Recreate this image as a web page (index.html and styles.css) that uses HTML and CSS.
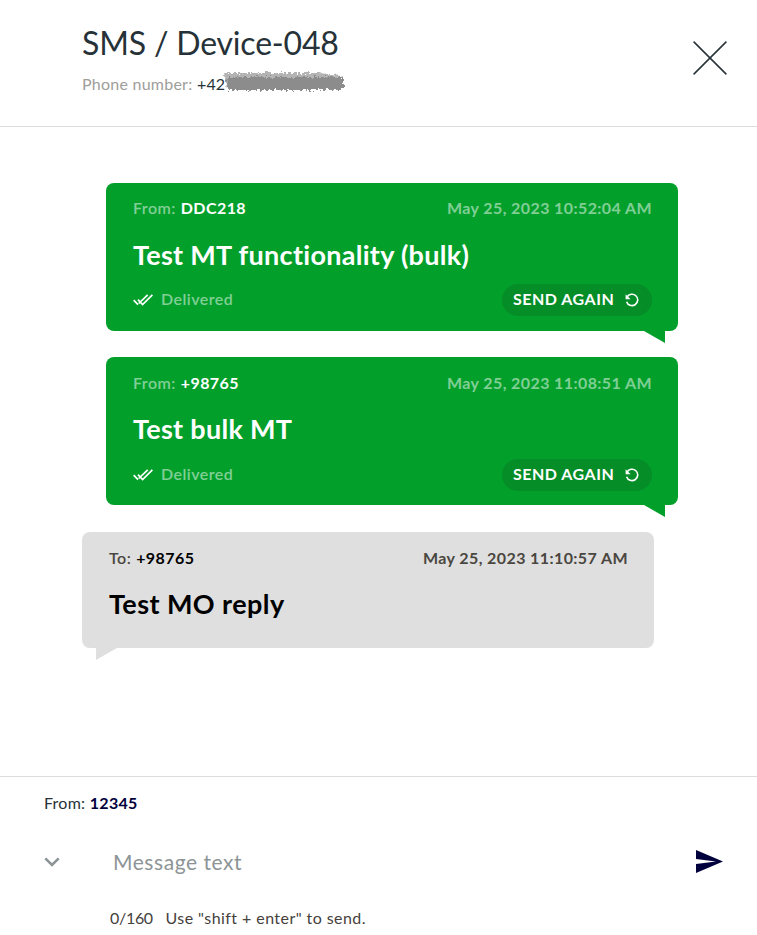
FILE: index.html
```html
<!DOCTYPE html>
<html lang="en">
<head>
<meta charset="utf-8">
<title>SMS / Device-048</title>
<link rel="stylesheet" href="styles.css">
</head>
<body>
<svg class="defs" width="0" height="0" aria-hidden="true">
  <symbol id="checks" viewBox="0 0 20 12"><path d="M.7 6.2 5 10.600M14.700.9 5.700 9.500M5 5.600l4.600 5L19.400.9" fill="none" stroke="currentColor" stroke-width="1.700"/></symbol>
  <symbol id="redo" viewBox="0 0 14 14"><path d="M2 4.200A5.700 5.700 0 1 1 1.600 8.700" fill="none" stroke="currentColor" stroke-width="1.600"/><path d="M.6 1.200v5h5z" fill="currentColor"/></symbol>
  <filter id="rough" x="-5%" y="-20%" width="110%" height="140%">
    <feTurbulence type="fractalNoise" baseFrequency=".35" numOctaves="2" seed="4" result="n"/>
    <feDisplacementMap in="SourceGraphic" in2="n" scale="7" xChannelSelector="R" yChannelSelector="G"/>
    <feGaussianBlur stdDeviation=".6"/>
  </filter>
</svg>
<div class="dialog">
  <header class="header">
    <div>
      <h1 class="title">SMS / Device-048</h1>
      <p class="phone"><span class="phone-label">Phone number:</span><span class="phone-value">+42</span><svg class="redaction" viewBox="0 0 120 22"><g filter="url(#rough)"><path d="M0 2h95l23 2 2 4v9H4z" opacity=".65"/><path d="M3 6h117v13H5z"/></g></svg></p>
    </div>
    <svg class="close" viewBox="0 0 34 34"><path d="M.6.6l32.800 32.800M33.400.6.6 33.400"/></svg>
  </header>
  <main class="thread">
    <article class="bubble sent">
      <div class="row meta"><span class="party"><span class="label">From:</span><b class="addr">DDC218</b></span><time class="time">May 25, 2023 10:52:04 AM</time></div>
      <p class="text">Test MT functionality (bulk)</p>
      <div class="row actions"><span class="status"><svg class="checks"><use href="#checks"/></svg><span class="label">Delivered</span></span><button class="again">SEND AGAIN<svg class="redo"><use href="#redo"/></svg></button></div>
    </article>
    <article class="bubble sent">
      <div class="row meta"><span class="party"><span class="label">From:</span><b class="addr">+98765</b></span><time class="time">May 25, 2023 11:08:51 AM</time></div>
      <p class="text">Test bulk MT</p>
      <div class="row actions"><span class="status"><svg class="checks"><use href="#checks"/></svg><span class="label">Delivered</span></span><button class="again">SEND AGAIN<svg class="redo"><use href="#redo"/></svg></button></div>
    </article>
    <article class="bubble received">
      <div class="row meta"><span class="party"><span class="label">To:</span><b class="addr">+98765</b></span><time class="time">May 25, 2023 11:10:57 AM</time></div>
      <p class="text">Test MO reply</p>
    </article>
  </main>
  <footer class="composer">
    <p class="from"><span>From:</span><b>12345</b></p>
    <div class="entry">
      <svg class="chevron" viewBox="0 0 16 10"><path d="M1.300 1.300 8 8l6.700-6.700"/></svg>
      <span class="placeholder">Message text</span>
      <svg class="send" viewBox="0 0 27 24"><path d="M0 0 27 11.500 0 23V14L20 11.500 0 9z"/></svg>
    </div>
    <p class="hint"><span class="count">0/160</span><span class="tip">Use "shift + enter" to send.</span></p>
  </footer>
</div>
</body>
</html>
```
FILE: styles.css
```css
* { box-sizing: border-box; }

body {
  margin: 0;
  background: #fff;
  color: #263238;
  font: 16px/20px Lato, "Open Sans", sans-serif;
}

h1, p { margin: 0; font-weight: 400; }

.defs { position: absolute; }

.dialog {
  display: flex;
  flex-direction: column;
  height: 935px;
}

.header {
  display: flex;
  justify-content: space-between;
  height: 127px;
  padding: 24px 30px 0 82px;
  border-bottom: 1px solid #dcdcdc;
}

.title { font-size: 32px; line-height: 38px; letter-spacing: -.18px; }
.phone { display: flex; align-items: center; margin-top: 12px; }
.phone-label { width: 115px; color: #9e9e9a; letter-spacing: .24px; }
.phone-value { width: 28px; letter-spacing: .1px; }
.redaction { width: 120px; height: 22px; margin: -5px 0 0 -2px; fill: #8c8c8c; overflow: visible; }
.close { width: 34px; height: 34px; margin-top: 17px; fill: none; stroke: #263238; stroke-width: 1.5; }

.thread {
  flex: 1;
  padding: 56px 79px 0 82px;
}

.bubble {
  position: relative;
  width: 572px;
  height: 148px;
  padding: 16px 27px 0;
  border-radius: 8px;
}
.bubble::after {
  content: "";
  position: absolute;
  top: 100%;
  width: 21px;
  height: 12px;
  background: inherit;
}

.sent { margin: 0 0 26px auto; background: #029f2b; color: #fff; }
.sent::after { right: 13px; clip-path: polygon(0 0, 100% 0, 100% 100%); }
.received { height: 116px; margin-top: 27px; background: #dfdfdf; color: #000; }
.received::after { left: 14px; clip-path: polygon(0 0, 100% 0, 0 100%); }

.row { display: flex; align-items: center; justify-content: space-between; }
.meta { height: 20px; }
.party { display: flex; gap: 5px; }
.addr { font-weight: 700; letter-spacing: .42px; }
.label { font-weight: 600; letter-spacing: .45px; }
.time { font-weight: 700; letter-spacing: .4px; margin-right: -1px; }
.sent .label, .sent .time { color: rgba(255, 255, 255, .5); }
.received .label, .received .time { color: #4a4640; }
.text { margin-top: 18px; font-size: 27px; line-height: 36px; font-weight: 700; letter-spacing: .29px; }
.received .text { letter-spacing: .42px; }
.actions { margin: 12px -1px 0 0; height: 32px; }
.status { display: flex; align-items: center; padding-bottom: 2px; }
.checks { width: 20px; height: 12px; margin: 1px 8px 0 0; }

.again {
  display: flex;
  align-items: center;
  gap: 10.5px;
  width: 150px;
  height: 32px;
  padding: 0 0 2px 11px;
  border: 0;
  border-radius: 16px;
  background: #058d28;
  color: #fff;
  font: inherit;
  font-weight: 700;
  letter-spacing: .5px;
}
.redo { width: 14px; height: 14px; margin-top: 2px; }

.bubble:first-child .meta { padding-bottom: 2px; }
.bubble:first-child .actions { margin-top: 11px; }

.composer { height: 159px; border-top: 1px solid #dcdcdc; padding: 16px 34px 0 44px; }
.from { display: flex; gap: 4.5px; letter-spacing: .25px; }
.from b { color: #00003c; font-weight: 700; }
.entry { display: flex; align-items: center; margin-top: 33px; height: 32px; }
.chevron { width: 16px; height: 10px; fill: none; stroke: #8d9496; stroke-width: 2.6; }
.placeholder { flex: 1; margin-left: 53px; font-size: 21px; letter-spacing: .55px; color: #8d9496; }
.send { width: 27px; height: 24px; fill: #00003c; }
.hint { display: flex; margin: 30px 0 0 66px; color: #45413c; }
.count { width: 55.5px; letter-spacing: -.3px; }
.tip { letter-spacing: .43px; }
```
